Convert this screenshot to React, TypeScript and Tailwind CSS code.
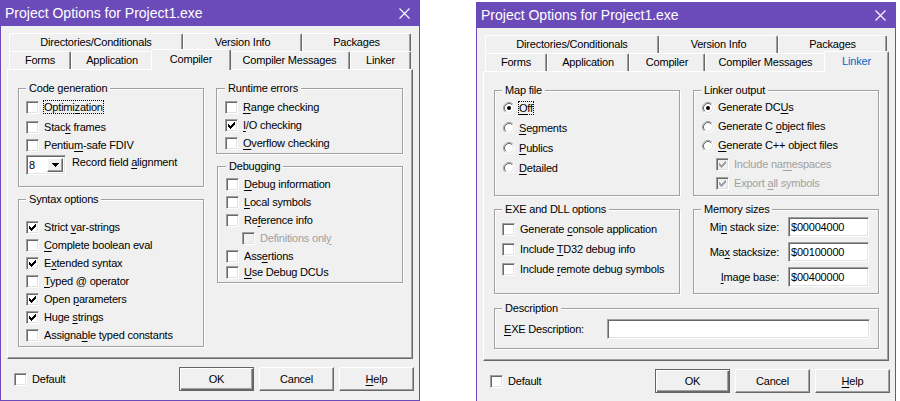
import { ReactNode } from "react";
import { clsx, type ClassValue } from "clsx";
import { twMerge } from "tailwind-merge";

const cn = (...c: ClassValue[]) => twMerge(clsx(c));

// classic 7x7 check mark, pixel runs [x, y, width] in 13x13 box coords
const TICK = [
	[9, 3, 1],
	[8, 4, 2],
	[3, 5, 1],
	[7, 5, 3],
	[3, 6, 2],
	[6, 6, 3],
	[3, 7, 5],
	[4, 8, 3],
	[5, 9, 1],
];

const SUNKEN =
	"border border-t-[#a0a0a0] border-l-[#a0a0a0] border-r-white border-b-white shadow-[inset_1px_1px_0_#696969,inset_-1px_-1px_0_#e3e3e3]";
const RAISED =
	"border border-t-white border-l-white border-r-[#696969] border-b-[#696969] shadow-[inset_-1px_-1px_0_#a0a0a0]";

function Accel({ text }: { text: string }) {
	const i = text.indexOf("&");
	if (i < 0) return <>{text}</>;
	return (
		<>
			{text.slice(0, i)}
			<u className="underline-offset-[2px]">{text[i + 1]}</u>
			{text.slice(i + 2)}
		</>
	);
}

function Box({ checked, disabled }: { checked?: boolean; disabled?: boolean }) {
	return (
		<div className={cn("w-[13px] h-[13px] shrink-0", SUNKEN, disabled ? "bg-[#f0f0f0]" : "bg-white")}>
			{checked && (
				<svg width="11" height="11" viewBox="0 0 11 11" className="block" shapeRendering="crispEdges">
					{TICK.map(([x, y, w]) => (
						<rect key={`${x}-${y}`} x={x - 1} y={y - 1} width={w} height={1} fill={disabled ? "#a0a0a0" : "#000"} />
					))}
				</svg>
			)}
		</div>
	);
}

function Radio({ checked }: { checked?: boolean }) {
	return (
		<svg width="12" height="12" viewBox="0 0 12 12" className="shrink-0 ml-[1px]">
			<circle cx="6" cy="6" r="5" fill="#fff" />
			<path d="M2.11 9.89A5.5 5.5 0 0 1 9.89 2.11" stroke="#a0a0a0" fill="none" />
			<path d="M9.89 2.11A5.5 5.5 0 0 1 2.11 9.89" stroke="#fff" fill="none" />
			<path d="M2.82 9.18A4.5 4.5 0 0 1 9.18 2.82" stroke="#696969" fill="none" />
			<path d="M9.18 2.82A4.5 4.5 0 0 1 2.82 9.18" stroke="#e3e3e3" fill="none" />
			{checked && <circle cx="6" cy="6" r="2" fill="#000" />}
		</svg>
	);
}

type OptProps = {
	label: string;
	checked?: boolean;
	disabled?: boolean;
	focus?: boolean;
	radio?: boolean;
	className?: string;
};

function Opt({ label, checked, disabled, focus, radio, className }: OptProps) {
	return (
		<div className={cn("h-[18px] shrink-0 flex items-center", radio ? "gap-[4px]" : "gap-[5px]", className)}>
			{radio ? <Radio checked={checked} /> : <Box checked={checked} disabled={disabled} />}
			<span
				className={cn(
					"whitespace-nowrap",
					disabled && "text-[#a0a0a0]",
					focus && "leading-[12px] border border-dotted border-black -ml-[1px]"
				)}
			>
				<Accel text={label} />
			</span>
		</div>
	);
}

function Group({ title, className, children }: { title: string; className?: string; children?: ReactNode }) {
	return (
		<div
			className={cn(
				"flex flex-col shrink-0 border border-[#a0a0a0] shadow-[inset_1px_1px_0_#fff,1px_1px_0_#fff] px-[7px]",
				className
			)}
		>
			<span className="-mt-[7px] self-start bg-[#f0f0f0] px-[3px] leading-[13px] whitespace-nowrap">{title}</span>
			{children}
		</div>
	);
}

function Edit({ value, className }: { value?: string; className?: string }) {
	return (
		<div className={cn("h-[20px] shrink-0 flex items-center pl-[2px] bg-white", SUNKEN, className)}>{value}</div>
	);
}

function Button({ label, isDefault }: { label: string; isDefault?: boolean }) {
	return (
		<div
			className={cn(
				"w-[75px] h-[24px] flex items-center justify-center",
				isDefault
					? "border border-[#646464] shadow-[inset_1px_1px_0_#fff,inset_-1px_-1px_0_#696969,inset_-2px_-2px_0_#a0a0a0]"
					: RAISED
			)}
		>
			<Accel text={label} />
		</div>
	);
}

const ROW1 = [
	{ label: "Directories/Conditionals", w: "w-[174px]" },
	{ label: "Version Info", w: "w-[119px]" },
	{ label: "Packages", w: "w-[109px]" },
];

const ROW2 = [
	{ label: "Forms", w: "w-[62px]", wide: "w-[66px]" },
	{ label: "Application", w: "w-[82px]", wide: "w-[86px]" },
	{ label: "Compiler", w: "w-[76px]", wide: "w-[80px]" },
	{ label: "Compiler Messages", w: "w-[121px]", wide: "w-[125px]" },
	{ label: "Linker", w: "w-[61px]", wide: "w-[65px]" },
];

function Tab({ label, w, selected, blue }: { label: string; w: string; selected?: boolean; blue?: boolean }) {
	return (
		<div
			className={cn(
				"shrink-0 flex items-center justify-center whitespace-nowrap bg-[#f0f0f0] rounded-t-[2px] border-l border-t border-r border-l-white border-t-white border-r-[#696969] shadow-[inset_-1px_0_0_#a0a0a0]",
				selected ? "relative z-10 -mx-[2px] -mt-[2px] h-[21px] pb-[2px]" : "h-[18px]",
				blue && "text-[#0066cc]",
				w
			)}
		>
			{label}
		</div>
	);
}

function Dialog({ selected, className, children }: { selected: string; className?: string; children: ReactNode }) {
	return (
		<div
			className={cn(
				"w-[420px] h-[401px] shrink-0 flex flex-col bg-[#f0f0f0] border-x border-b border-[#6b4bb9]",
				className
			)}
		>
			<div className="h-[26px] shrink-0 flex items-center bg-[#6b4bb9] pl-[4px] pr-[9px] text-white text-[14px] tracking-[0px]">
				<span>Project Options for Project1.exe</span>
				<svg width="11" height="11" viewBox="0 0 11 11" className="ml-auto">
					<path d="M0.5 0.5L10.5 10.5M10.5 0.5L0.5 10.5" stroke="#fff" strokeWidth="1.1" />
				</svg>
			</div>
			<div className="flex flex-col px-[6px] pt-[7px]">
				<div className="flex items-start h-[18px] ml-[2px]">
					{ROW1.map((t) => (
						<Tab key={t.label} label={t.label} w={t.w} />
					))}
				</div>
				<div className="flex items-start h-[18px] ml-[2px]">
					{ROW2.map((t) => (
						<Tab
							key={t.label}
							label={t.label}
							w={t.label === selected ? t.wide : t.w}
							selected={t.label === selected}
							blue={t.label === selected && selected === "Linker"}
						/>
					))}
				</div>
				<div className={cn("h-[290px] pt-[18px] pl-[10px]", RAISED)}>{children}</div>
			</div>
			<div className="flex items-start pt-[8px] pl-[13px] pr-[5px]">
				<div className="h-[24px] flex items-center gap-[5px]">
					<Box />
					<span>Default</span>
				</div>
				<div className="ml-auto flex gap-[5px]">
					<Button label="OK" isDefault />
					<Button label="Cancel" />
					<Button label="&Help" />
				</div>
			</div>
		</div>
	);
}

function CompilerPage() {
	return (
		<div className="flex gap-[12px]">
			<div className="flex flex-col gap-[12px] w-[186px]">
				<Group title="Code generation" className="h-[99px]">
					<Opt label="Optimi&zation" focus className="mt-[3px]" />
					<Opt label="Stac&k frames" className="mt-[2px]" />
					<Opt label="Pentiu&m-safe FDIV" />
					<div className="mt-[1px] h-[20px] flex items-center gap-[6px]">
						<div className={cn("w-[40px] h-[20px] shrink-0 flex items-center bg-white py-[2px] pr-[2px]", SUNKEN)}>
							<span className="flex-1 pl-[2px]">8</span>
							<div className={cn("w-[16px] h-full flex items-center justify-center bg-[#f0f0f0]", RAISED)}>
								<svg width="7" height="4" viewBox="0 0 7 4" shapeRendering="crispEdges">
									<rect x="0" y="0" width="7" height="1" fill="#000" />
									<rect x="1" y="1" width="5" height="1" fill="#000" />
									<rect x="2" y="2" width="3" height="1" fill="#000" />
									<rect x="3" y="3" width="1" height="1" fill="#000" />
								</svg>
							</div>
						</div>
						<span className="-mt-[6px] whitespace-nowrap">
							<Accel text="Record field &alignment" />
						</span>
					</div>
				</Group>
				<Group title="Syntax options" className="h-[148px]">
					<Opt label="Strict &var-strings" checked className="mt-[12px]" />
					<Opt label="&Complete boolean eval" />
					<Opt label="E&xtended syntax" checked />
					<Opt label="&Typed @ operator" />
					<Opt label="Open &parameters" checked />
					<Opt label="Huge &strings" checked />
					<Opt label="Assigna&ble typed constants" />
				</Group>
			</div>
			<div className="flex flex-col gap-[12px] w-[187px]">
				<Group title="Runtime errors" className="h-[66px] px-[8px]">
					<Opt label="&Range checking" className="mt-[3px]" />
					<Opt label="&I/O checking" checked />
					<Opt label="&Overflow checking" />
				</Group>
				<Group title="Debugging" className="h-[117px] ml-[1px] px-[8px]">
					<Opt label="&Debug information" className="mt-[2px]" />
					<Opt label="&Local symbols" />
					<Opt label="Re&ference info" />
					<Opt label="Definitions onl&y" disabled className="ml-[16px]" />
					<Opt label="Ass&ertions" />
					<Opt label="&Use Debug DCUs" className="-mt-[2px]" />
				</Group>
			</div>
		</div>
	);
}

function LinkerPage() {
	return (
		<div className="flex flex-col gap-[13px]">
			<div className="flex gap-[13px]">
				<Group title="Map file" className="w-[186px] h-[106px]">
					<Opt radio label="&Off" checked focus className="h-[20px] mt-[1px]" />
					<Opt radio label="&Segments" className="h-[20px]" />
					<Opt radio label="&Publics" className="h-[20px]" />
					<Opt radio label="&Detailed" className="h-[20px]" />
				</Group>
				<Group title="Linker output" className="w-[186px] h-[106px]">
					<Opt radio label="Generate DC&Us" checked className="h-[19px] mt-[1px]" />
					<Opt radio label="Generate C &object files" className="h-[19px]" />
					<Opt radio label="&Generate C++ object files" className="h-[19px]" />
					<Opt label="Include na&mespaces" checked disabled className="h-[19px] ml-[15px]" />
					<Opt label="Export &all symbols" checked disabled className="h-[19px] ml-[15px]" />
				</Group>
			</div>
			<div className="flex gap-[13px]">
				<Group title="EXE and DLL options" className="w-[186px] h-[85px]">
					<Opt label="Generate &console application" className="h-[20px] mt-[3px]" />
					<Opt label="Include &TD32 debug info" className="h-[20px]" />
					<Opt label="Include &remote debug symbols" className="h-[20px]" />
				</Group>
				<Group title="Memory sizes" className="w-[186px] h-[85px] gap-[5px]">
					{[
						["Mi&n stack size:", "$00004000"],
						["Ma&x stacksize:", "$00100000"],
						["&Image base:", "$00400000"],
					].map(([label, value], i) => (
						<div key={label} className={cn("flex items-center justify-end gap-[9px] pr-[2px]", i === 0 && "-mt-[4px]")}>
							<span className="whitespace-nowrap">
								<Accel text={label} />
							</span>
							<Edit value={value} className="w-[81px]" />
						</div>
					))}
				</Group>
			</div>
			<Group title="Description" className="w-[385px] h-[41px] mt-[1px]">
				<div className="mt-[4px] flex items-center pl-[2px] pr-[1px]">
					<span className="whitespace-nowrap">
						<Accel text="&EXE Description:" />
					</span>
					<Edit className="ml-auto w-[263px]" />
				</div>
			</Group>
		</div>
	);
}

export default function App() {
	return (
		<div className="w-[900px] h-[401px] bg-white flex items-start overflow-hidden font-['Liberation_Sans',Arial,sans-serif] text-[11px] leading-[13px] tracking-[-0.2px] text-black">
			<Dialog selected="Compiler">
				<CompilerPage />
			</Dialog>
			<Dialog selected="Linker" className="ml-[56px] mt-[2px]">
				<LinkerPage />
			</Dialog>
		</div>
	);
}
